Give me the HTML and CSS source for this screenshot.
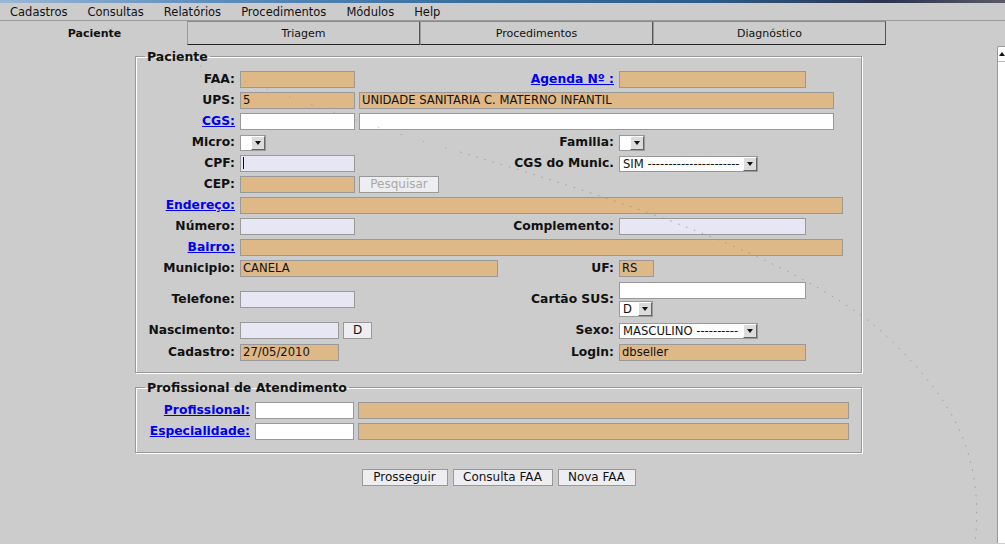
FILE: index.html
```html
<!DOCTYPE html>
<html lang="pt-BR">
<head>
<meta charset="utf-8">
<title>FAA - Paciente</title>
<link rel="stylesheet" href="styles.css">
</head>
<body>
<div class="topstrip"></div>
<nav class="menubar">
  <span class="mi">Cadastros</span>
  <span class="mi">Consultas</span>
  <span class="mi">Relatórios</span>
  <span class="mi">Procedimentos</span>
  <span class="mi">Módulos</span>
  <span class="mi">Help</span>
</nav>
<div class="tabs">
  <div class="tab active">Paciente</div>
  <div class="tab">Triagem</div>
  <div class="tab">Procedimentos</div>
  <div class="tab">Diagnóstico</div>
</div>
<div class="body">
  <main class="main">
    <fieldset class="fs fs1">
      <legend>Paciente</legend>
      <div class="rows">
        <div class="row">
          <label class="lc">FAA:</label>
          <div class="fc"><span class="inp tan w115"></span></div>
          <label class="lc2"><a href="#">Agenda Nº :</a></label>
          <span class="inp tan w187"></span>
        </div>
        <div class="row">
          <label class="lc">UPS:</label>
          <span class="inp tan w115">5</span>
          <span class="inp tan w475 ml4">UNIDADE SANITARIA C. MATERNO INFANTIL</span>
        </div>
        <div class="row">
          <label class="lc"><a href="#">CGS:</a></label>
          <span class="inp wh w115"></span>
          <span class="inp wh w475 ml4"></span>
        </div>
        <div class="row">
          <label class="lc">Micro:</label>
          <div class="fc"><span class="sel w26"><span class="sv"></span><span class="sb"><i class="tri"></i></span></span></div>
          <label class="lc2">Familia:</label>
          <span class="sel w26"><span class="sv"></span><span class="sb"><i class="tri"></i></span></span>
        </div>
        <div class="row">
          <label class="lc">CPF:</label>
          <div class="fc"><span class="inp lav w115"><i class="caret"></i></span></div>
          <label class="lc2">CGS do Munic.</label>
          <span class="sel w139"><span class="sv">SIM ----------------------</span><span class="sb"><i class="tri"></i></span></span>
        </div>
        <div class="row">
          <label class="lc">CEP:</label>
          <span class="inp tan w115"></span>
          <button class="btn disabled ml4 w80" type="button">Pesquisar</button>
        </div>
        <div class="row">
          <label class="lc"><a href="#">Endereço:</a></label>
          <span class="inp tan w603"></span>
        </div>
        <div class="row">
          <label class="lc">Número:</label>
          <div class="fc"><span class="inp lav w115"></span></div>
          <label class="lc2">Complemento:</label>
          <span class="inp lav w187"></span>
        </div>
        <div class="row">
          <label class="lc"><a href="#">Bairro:</a></label>
          <span class="inp tan w603"></span>
        </div>
        <div class="row">
          <label class="lc">Municipio:</label>
          <div class="fc"><span class="inp tan w258">CANELA</span></div>
          <label class="lc2">UF:</label>
          <span class="inp tan w35">RS</span>
        </div>
        <div class="row tall mt1">
          <label class="lc">Telefone:</label>
          <div class="fc"><span class="inp lav w115"></span></div>
          <label class="lc2">Cartão SUS:</label>
          <div class="stack">
            <span class="inp wh w187"></span>
            <span class="sel w34"><span class="sv">D</span><span class="sb"><i class="tri"></i></span></span>
          </div>
        </div>
        <div class="row mt1">
          <label class="lc">Nascimento:</label>
          <div class="fc"><span class="inp lav w99"></span><button class="btn w29" type="button">D</button></div>
          <label class="lc2">Sexo:</label>
          <span class="sel w139"><span class="sv">MASCULINO ----------</span><span class="sb"><i class="tri"></i></span></span>
        </div>
        <div class="row mt1">
          <label class="lc">Cadastro:</label>
          <div class="fc"><span class="inp tan w99">27/05/2010</span></div>
          <label class="lc2">Login:</label>
          <span class="inp tan w187">dbseller</span>
        </div>
      </div>
    </fieldset>

    <fieldset class="fs fs2">
      <legend>Profissional de Atendimento</legend>
      <div class="rows">
        <div class="row">
          <label class="lcw"><a href="#">Profissional:</a></label>
          <span class="inp wh w99"></span>
          <span class="inp tan w491 ml4"></span>
        </div>
        <div class="row">
          <label class="lcw"><a href="#">Especialidade:</a></label>
          <span class="inp wh w99"></span>
          <span class="inp tan w491 ml4"></span>
        </div>
      </div>
    </fieldset>

    <div class="actions">
      <button class="btn w86" type="button">Prosseguir</button>
      <button class="btn w100" type="button">Consulta FAA</button>
      <button class="btn w78" type="button">Nova FAA</button>
    </div>
  </main>
  <aside class="vscroll"><span class="up"><i class="tri-up"></i></span></aside>
</div>
<svg class="trail" width="1005" height="544" viewBox="0 0 1005 544" aria-hidden="true">
  <path class="faint" d="M200 66 C300 100, 380 130, 460 152" />
  <path d="M460 152 C620 200, 790 255, 880 330 C950 395, 985 450, 975 544" />
</svg>
</body>
</html>
```

FILE: styles.css
```css
* { box-sizing: border-box; }
html, body { margin: 0; padding: 0; }
body {
  width: 1005px;
  height: 544px;
  overflow: hidden;
  position: relative;
  background: #cccccc;
  font-family: "DejaVu Sans", "Liberation Sans", sans-serif;
  color: #111;
}
.topstrip {
  height: 3px;
  background: linear-gradient(to right, #9ab8d6 0%, #5f8fbd 20%, #3a6f9f 45%, #2c5d8a 70%, #2b3350 88%, #5a5a66 100%);
}
.menubar {
  display: flex;
  gap: 20px;
  height: 18px;
  padding-left: 10px;
  border-bottom: 1px solid #999;
  font-size: 11.5px;
  line-height: 18px;
  color: #111;
}
.tabs {
  display: flex;
  height: 24px;
  padding-left: 2px;
}
.tab {
  width: 233px;
  height: 24px;
  text-align: center;
  font-size: 11px;
  line-height: 23px;
  color: #111;
  border-top: 1px solid #8a8a8a;
  border-left: 1px solid #9a9a9a;
  border-right: 1px solid #555;
  border-bottom: 1px solid #222;
}
.tab.active {
  width: 185px;
  border: none;
  font-weight: bold;
  line-height: 25px;
}
.body {
  display: flex;
  height: 498px;
}
.main {
  width: 997px;
}
.vscroll {
  width: 8px;
  margin-top: 1px;
  background: #fff;
  border-left: 1px solid #999;
  border-top: 1px solid #999;
  border-top-left-radius: 2px;
}
.up {
  display: flex;
  align-items: center;
  justify-content: flex-end;
  height: 15px;
  border-bottom: 1px solid #bbb;
}
.tri-up {
  width: 0; height: 0;
  border-left: 3px solid transparent;
  border-right: 3px solid transparent;
  border-bottom: 4px solid #111;
}

/* fieldsets */
.fs {
  width: 727px;
  margin: 4px auto 0;
  padding: 7px 0 11px 0;
  min-width: 0;
  border: 1px solid #999;
  box-shadow: inset 1px 1px 0 #fff, 1px 1px 0 #fff;
}
.fs2 {
  margin-top: 7px;
  padding: 7px 0 12px 0;
}
.fs legend {
  margin-left: 9px;
  padding: 0 2px;
  font-size: 12.5px;
  font-weight: bold;
  line-height: 15px;
  color: #111;
}
.rows {
  display: flex;
  flex-direction: column;
  gap: 4px;
}
.row {
  display: flex;
  align-items: center;
  height: 17px;
}
.row.tall { height: 35px; }
.row.mt1 { margin-top: 1px; }
.lc, .lc2, .lcw {
  text-align: right;
  margin-right: 5px;
  font-size: 12.3px;
  font-weight: bold;
  line-height: 17px;
  white-space: nowrap;
}
.lc { width: 99px; }
.lc2 { width: 114px; }
.lcw { width: 114px; }
.lc a, .lc2 a, .lcw a { color: #0000ee; text-decoration: underline; }
.fc {
  width: 260px;
  display: flex;
  align-items: center;
  gap: 4px;
}
.stack {
  display: flex;
  flex-direction: column;
  gap: 2px;
}

/* inputs */
.inp {
  display: block;
  height: 17px;
  border: 1px solid #999;
  padding: 0 2px;
  font-size: 11.6px;
  line-height: 15px;
  color: #111;
  white-space: nowrap;
  overflow: hidden;
}
.tan { background: #deb887; }
.lav { background: #e6e6f5; }
.wh { background: #fff; }
.caret {
  display: inline-block;
  width: 1px;
  height: 12px;
  margin-top: 1px;
  background: #111;
  vertical-align: top;
}
.w26 { width: 26px; }
.w29 { width: 29px; }
.w34 { width: 34px; }
.w35 { width: 35px; }
.w78 { width: 78px; }
.w80 { width: 80px; }
.w86 { width: 86px; }
.w99 { width: 99px; }
.w100 { width: 100px; }
.w115 { width: 115px; }
.w139 { width: 139px; }
.w187 { width: 187px; }
.w258 { width: 258px; }
.w475 { width: 475px; }
.w491 { width: 491px; }
.w603 { width: 603px; }

/* selects */
.sel {
  display: flex;
  height: 16px;
  border: 1px solid #999;
  background: #fff;
}
.sv {
  flex: 1;
  min-width: 0;
  padding-left: 3px;
  font-size: 11.6px;
  line-height: 14px;
  color: #111;
  white-space: nowrap;
  overflow: hidden;
}
.sb {
  display: flex;
  align-items: center;
  justify-content: center;
  width: 14px;
  background: #dcdcdc;
  border-top: 1px solid #fff;
  border-left: 1px solid #fff;
  border-right: 1px solid #666;
  border-bottom: 1px solid #666;
}
.tri {
  width: 0; height: 0;
  border-left: 3px solid transparent;
  border-right: 3px solid transparent;
  border-top: 4px solid #111;
}

/* buttons */
.btn {
  height: 17px;
  margin: 0;
  padding: 0;
  border: 1px solid #999;
  border-radius: 0;
  background: #eeeef2;
  font-family: "DejaVu Sans", "Liberation Sans", sans-serif;
  font-size: 12px;
  line-height: 15px;
  text-align: center;
  color: #111;
}
.btn.disabled { color: #a8a8a8; }
.ml4, .btn.ml4 { margin-left: 4px; }
.actions {
  display: flex;
  justify-content: center;
  gap: 5px;
  margin-top: 16px;
}

/* decorative pointer trail over the form */
.trail {
  position: absolute;
  left: 0;
  top: 0;
  pointer-events: none;
}
.trail path {
  fill: none;
  stroke: #8c8c8c;
  stroke-width: 1;
  stroke-dasharray: 1.5 7;
  opacity: 0.75;
}
.trail path.faint {
  stroke-dasharray: 1.5 22;
  opacity: 0.5;
}
```
